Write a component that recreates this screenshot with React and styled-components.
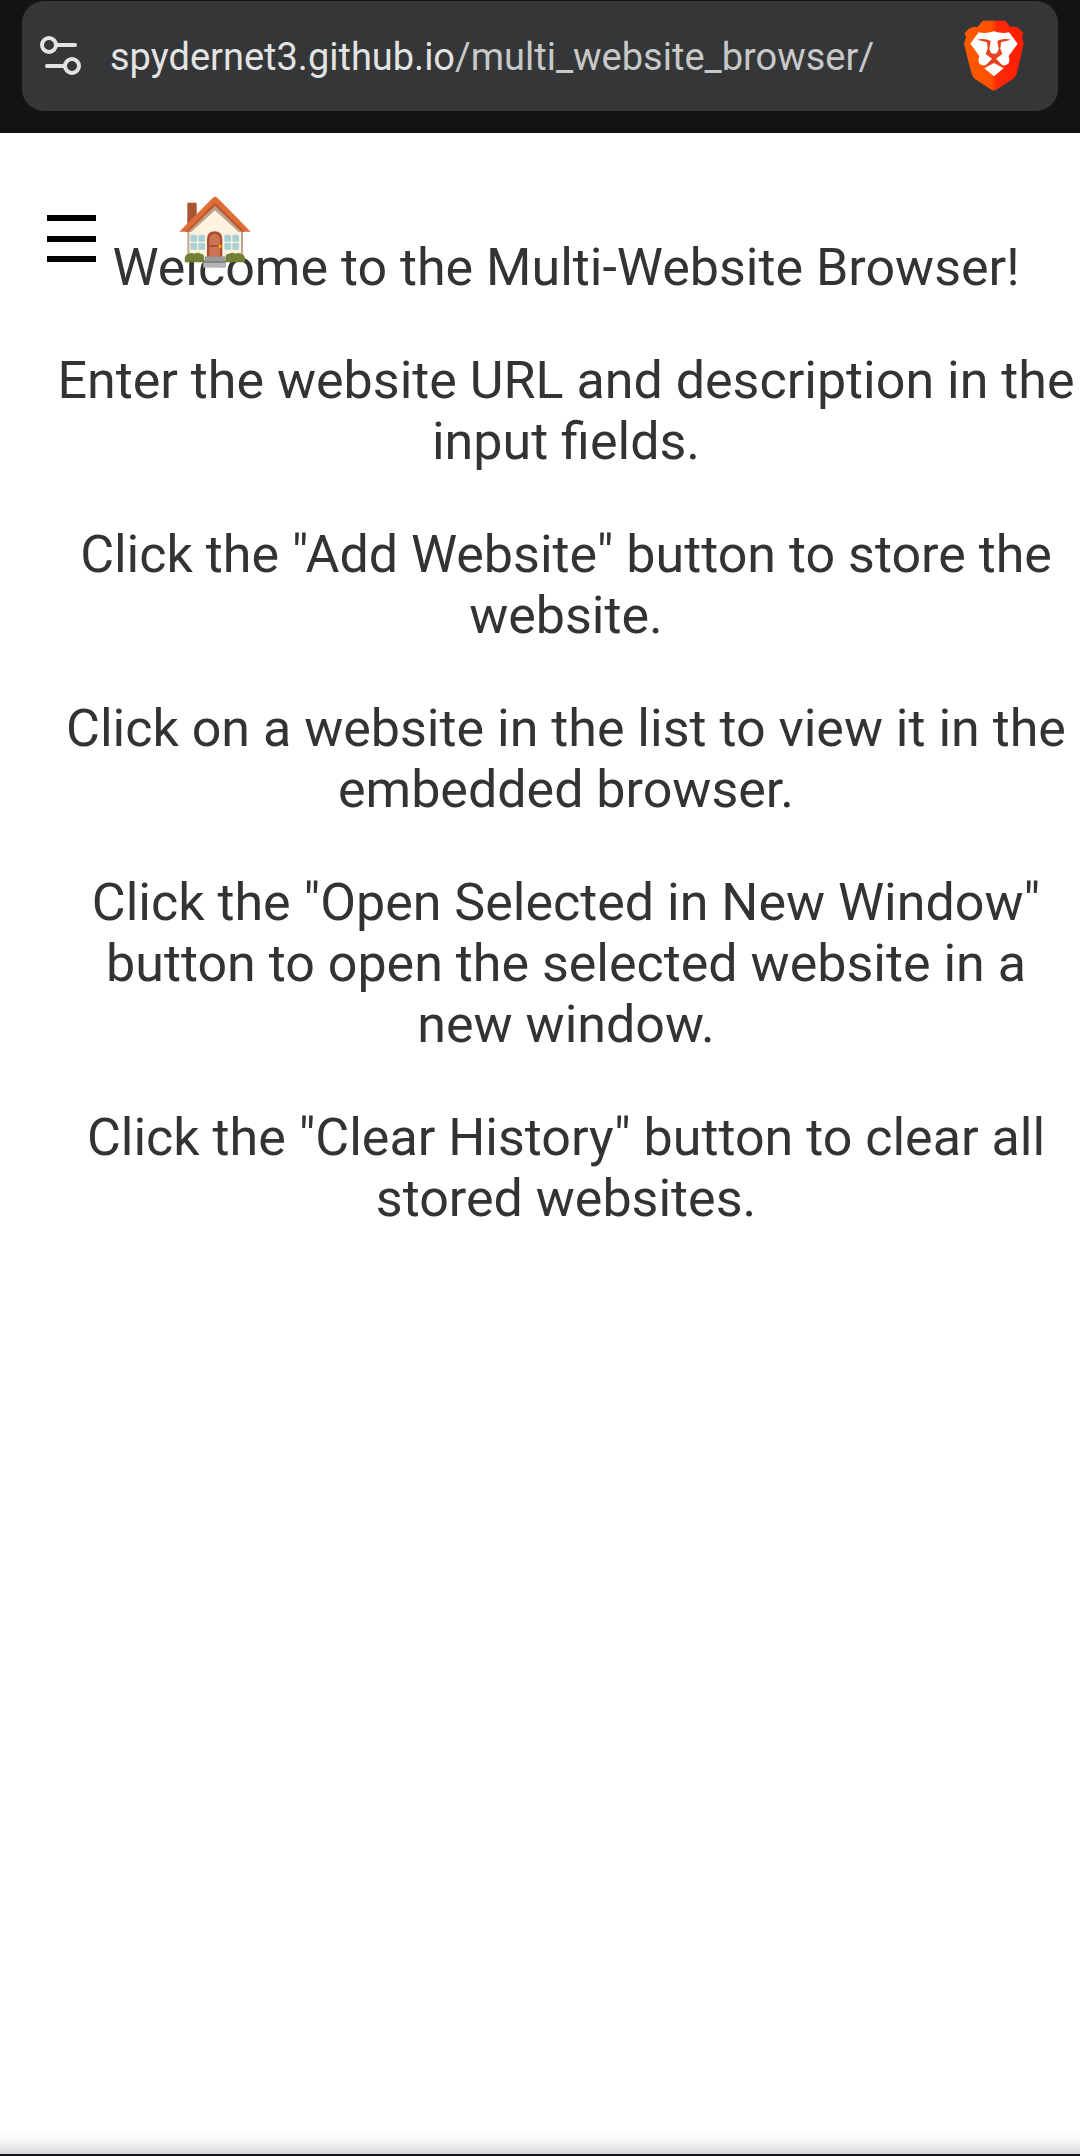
import React from "react";
import styled, { createGlobalStyle } from "styled-components";

const GlobalStyle = createGlobalStyle`
  * { box-sizing: border-box; }
  body {
    margin: 0;
    background: #ffffff;
    font-family: Roboto, "Liberation Sans", sans-serif;
    overflow-x: hidden;
  }
`;

const Page = styled.div`
  display: flex;
  flex-direction: column;
  min-height: 100vh;
`;

const BrowserBar = styled.header`
  padding: 1px 22px 22px;
  background: #131313;
`;

const AddressBox = styled.div`
  display: flex;
  align-items: center;
  height: 110px;
  padding: 0 34px 0 16px;
  border-radius: 22px;
  background: #353638;
`;

const IconButton = styled.button`
  display: flex;
  padding: 0;
  border: 0;
  background: none;
  cursor: pointer;
`;

const Address = styled.a`
  flex: 1;
  padding: 2px 0 0 24px;
  color: #c7c8c7;
  font-size: 38px;
  line-height: 48px;
  text-decoration: none;
  white-space: nowrap;
`;

const Host = styled.span`
  color: #e3e3e3;
`;

const Content = styled.main`
  position: relative;
  flex: 1;
  padding: 104px 0 52px 52px;
`;

const Toolbar = styled.nav`
  position: absolute;
  top: 63px;
  left: 47px;
  display: flex;
  align-items: center;
  gap: 83px;
`;

const Instructions = styled.section`
  display: flex;
  flex-direction: column;
  gap: 52px;
`;

const Paragraph = styled.p`
  margin: 0;
  color: #333333;
  font-size: 52px;
  line-height: 61px;
  text-align: center;
`;

const BottomEdge = styled.footer`
  height: 24px;
  border-bottom: 2px solid #15161b;
  background: linear-gradient(#ffffff, #f2f2f2 50%, #d9d9d9);
`;

const SiteSettingsIcon = () => (
  <svg width="48" height="48" viewBox="36 32 48 48" fill="none" stroke="#e3e3e3" strokeWidth="4" strokeLinecap="round" aria-hidden="true">
    <circle cx="47" cy="45" r="7" />
    <path d="M55 45H73" />
    <circle cx="70" cy="66" r="7" />
    <path d="M45 66H62" />
  </svg>
);

const LionIcon = () => (
  <svg width="60" height="72" viewBox="73 62 180 216" aria-hidden="true">
    <defs>
      <linearGradient id="mane" x1="0" x2="1">
        <stop offset="0" stopColor="#ff5a00" />
        <stop offset="0.46" stopColor="#ff5000" />
        <stop offset="0.55" stopColor="#ff2a08" />
        <stop offset="1" stopColor="#ff1c00" />
      </linearGradient>
    </defs>
    <path fill="url(#mane)" d="M129 64H197L212 83Q228 78 242 91L251 102L247 112L252 134L231 224Q228 233 219 240L172 270Q162 277 153 270L107 240Q99 234 96 224L73 134L79 112L75 102L84 91Q98 79 114 83Z" />
    <path fill="#fff" d="M117 99Q139 104 163 96Q187 104 208 99L234 133L207 170Q212 182 207 192Q194 204 184 195L163 178L142 195Q132 204 118 192Q114 182 119 170L92 133Z" />
    <path fill="#e8431c" d="M112 121Q130 116 149 123L153 126L149 148L154 161Q163 166 172 161L177 148L173 126L177 123Q196 116 214 121L184 129L182 148L188 164L169 178L184 194L193 202L188 205L163 191L138 205L133 202L142 194L157 178L138 164L144 148L142 129Z" />
    <path fill="#fff" d="M163 191L192 207L163 231L134 207Z" />
  </svg>
);

const MenuIcon = () => (
  <svg width="49" height="60" viewBox="0 -12 49 60" fill="#000" aria-hidden="true">
    <path d="M0 1H49V7H0ZM0 22H49V28H0ZM0 42H49V48H0Z" />
  </svg>
);

const HouseIcon = () => (
  <svg width="72" height="72" viewBox="59 49 216 216" aria-hidden="true">
    <path fill="#a85535" d="M84 69H112V112L84 135Z" />
    <path fill="#c3a58b" d="M84 135L167 65L251 135V230H84Z" />
    <path fill="#fff3e0" d="M90 154L167 84L245 154V232H90Z" />
    <path fill="#baa18a" d="M87 157L167 78L248 157H238L167 92L96 157Z" />
    <path fill="#e06c36" d="M60 156L160 55Q167 47 175 55L274 156H247L167 76L86 156Z" />
    <path fill="#bd5831" d="M78 156L167 69L257 156H247L167 78L87 156Z" />
    <g fill="#a9d0d5">
      <rect x="93" y="165" width="20" height="21" rx="3" />
      <rect x="117" y="165" width="20" height="21" rx="3" />
      <rect x="93" y="190" width="20" height="20" rx="3" />
      <rect x="117" y="190" width="20" height="20" rx="3" />
      <rect x="195" y="165" width="20" height="21" rx="3" />
      <rect x="219" y="165" width="20" height="21" rx="3" />
      <rect x="195" y="190" width="20" height="20" rx="3" />
      <rect x="219" y="190" width="20" height="20" rx="3" />
    </g>
    <path fill="#aa4e32" d="M143 232V180Q143 155 166 155T189 180V232Z" />
    <path fill="#cd7354" d="M150 230V183Q150 163 166 163T182 183V230Z" />
    <path stroke="#aa4e32" strokeWidth="6" d="M150 199H182" />
    <circle cx="182" cy="200" r="5" fill="#f7a900" />
    <path fill="#9a9a9a" d="M136 230H197V248H136Z" />
    <path fill="#b4b4b4" d="M132 246H200V264H132Z" />
    <path fill="#858585" d="M132 244H200V250H132Z" />
    <path fill="#728035" d="M77 248Q73 225 88 222Q97 218 105 222Q116 217 124 222Q134 222 134 234V248Z" />
    <path fill="#728035" d="M198 248V234Q198 222 209 222Q220 217 229 222Q238 218 247 223Q260 227 256 248Z" />
  </svg>
);

const messages = [
  "Welcome to the Multi-Website Browser!",
  "Enter the website URL and description in the input fields.",
  'Click the "Add Website" button to store the website.',
  "Click on a website in the list to view it in the embedded browser.",
  'Click the "Open Selected in New Window" button to open the selected website in a new window.',
  'Click the "Clear History" button to clear all stored websites.',
];

export default function App() {
  return (
    <Page>
      <GlobalStyle />
      <BrowserBar>
        <AddressBox>
          <IconButton aria-label="Site settings"><SiteSettingsIcon /></IconButton>
          <Address href="#">
            <Host>spydernet3.github.io</Host>/multi_website_browser/
          </Address>
          <IconButton aria-label="Shields"><LionIcon /></IconButton>
        </AddressBox>
      </BrowserBar>
      <Content>
        <Instructions>
          {messages.map((message) => (
            <Paragraph key={message}>{message}</Paragraph>
          ))}
        </Instructions>
        <Toolbar>
          <IconButton aria-label="Menu"><MenuIcon /></IconButton>
          <IconButton aria-label="Home"><HouseIcon /></IconButton>
        </Toolbar>
      </Content>
      <BottomEdge />
    </Page>
  );
}
